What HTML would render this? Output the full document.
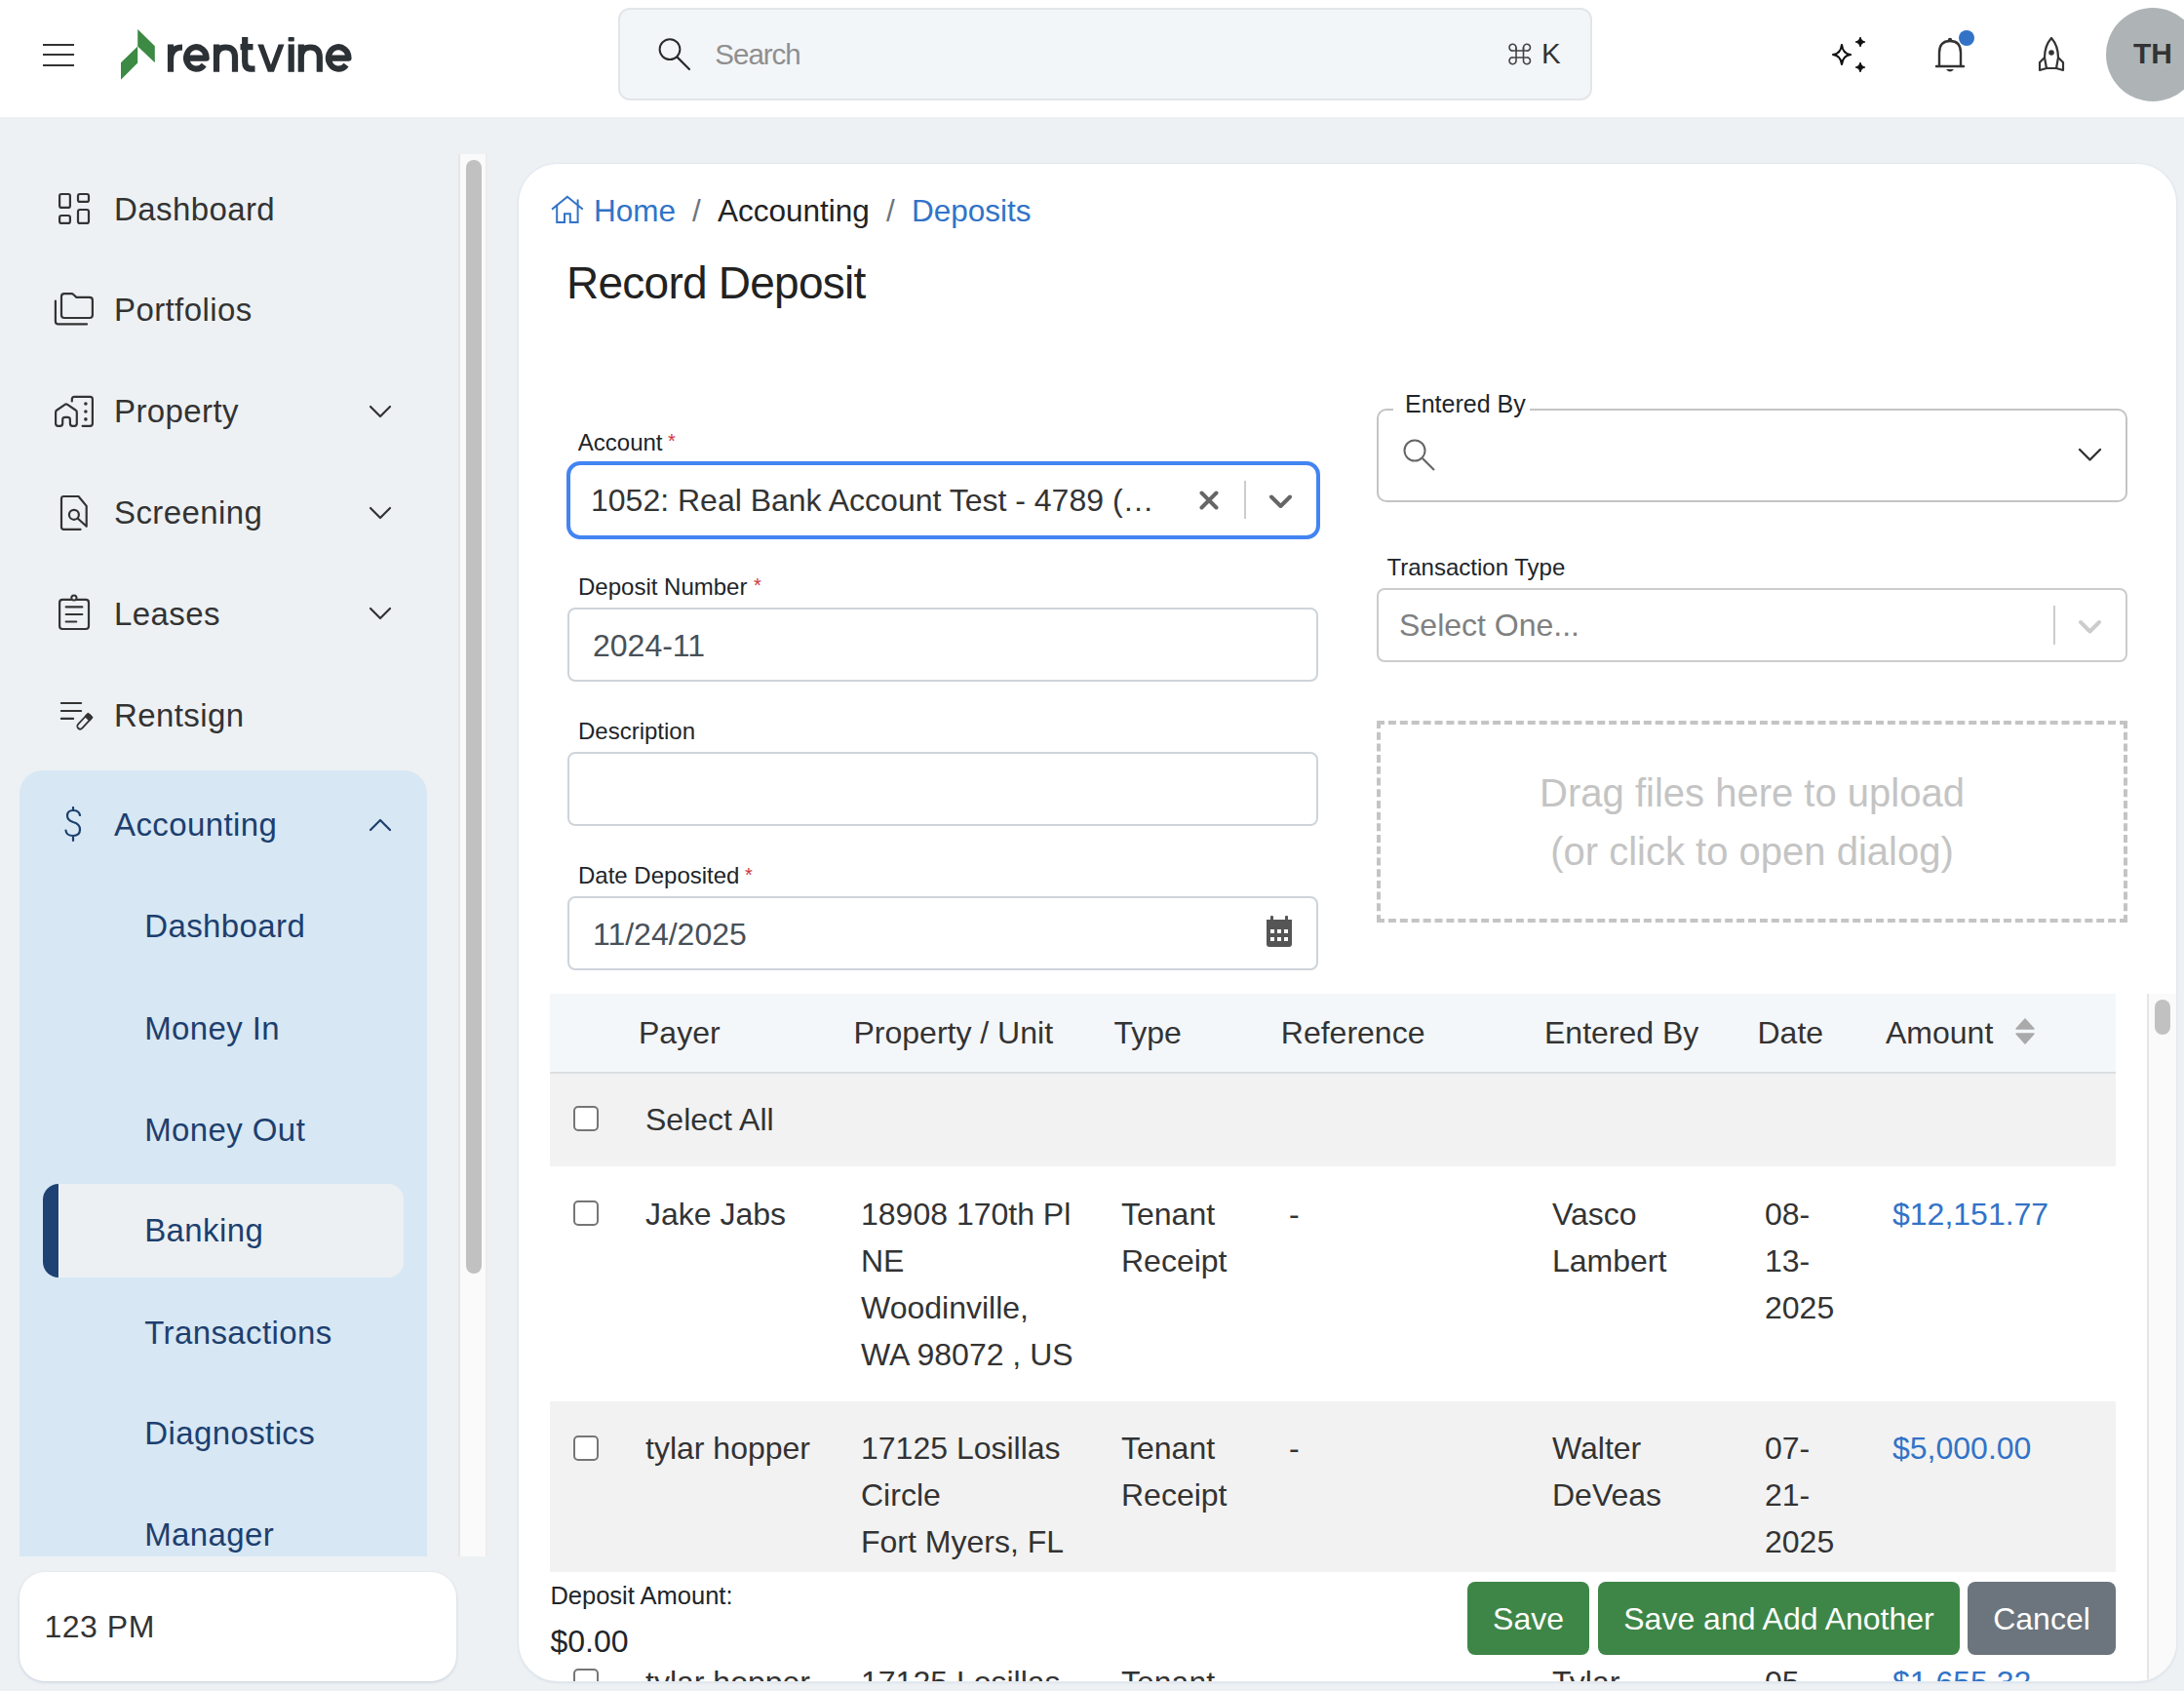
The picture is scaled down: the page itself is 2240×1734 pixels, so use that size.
<!DOCTYPE html>
<html><head><meta charset="utf-8">
<style>
html,body{margin:0;padding:0;}
body{width:2240px;height:1734px;overflow:hidden;position:relative;background:#edf1f4;font-family:"Liberation Sans",sans-serif;}
.a{position:absolute;}
.t{position:absolute;white-space:nowrap;}
#card{position:absolute;left:532px;top:168px;width:1700px;height:1556px;background:#fff;border-radius:40px;box-shadow:0 0 0 1px #e3e9f0, 0 1px 3px rgba(70,100,140,0.22);overflow:hidden;}
#cardin{position:absolute;left:-532px;top:-168px;width:2240px;height:1734px;}
</style></head><body>
<div class="a" style="left:0px;top:0px;width:2240px;height:120px;background:#fff;"></div>
<div class="a" style="left:44px;top:44.5px;width:32px;height:2px;background:#333333;"></div>
<div class="a" style="left:44px;top:55px;width:32px;height:2px;background:#333333;"></div>
<div class="a" style="left:44px;top:65.5px;width:32px;height:2px;background:#333333;"></div>
<svg class="a" style="left:0px;top:0px;" width="380" height="100" viewBox="0 0 380 100"><path d="M141.2 30.1 L158.8 47.2 L158.8 64.3 L141.2 47.6 Z M124 64.3 L141.2 47.6 L141.2 64.6 L124 81.7 Z" fill="#3c8a43"/><g fill="none" stroke="#2c3136" stroke-width="6.2" stroke-linecap="butt" stroke-linejoin="round"><path d="M175 73.8 V45.4 M175 61 Q175 48.5 187 48.5"/><path d="M191.1 59.6 H211.7 A10.3 11.2 0 1 0 209.3 66.6"/><path d="M222 73.8 V45.4 M222 59 Q222 48.5 231.5 48.5 Q241 48.5 241 59 V73.8"/><path d="M251.2 37.9 V63.5 Q251.2 70.7 258 70.7 H261.5 M246.5 48.2 H259.5"/><path d="M298.7 73.8 V45.4"/><path d="M308.8 73.8 V45.4 M308.8 59 Q308.8 48.5 318.3 48.5 Q327.8 48.5 327.8 59 V73.8"/><path d="M336.9 59.6 H357.5 A10.3 11.2 0 1 0 355.1 66.6"/></g><path d="M264.2 45.4 L270.2 45.4 L277.9 66.5 L285.6 45.4 L291.5 45.4 L280.9 73.8 L274.8 73.8 Z" fill="#2c3136"/><rect x="295.6" y="37.9" width="6.2" height="4.6" rx="1.2" fill="#2c3136"/></svg>
<div class="a" style="left:634px;top:8px;width:999px;height:95px;background:#f3f6f9;border:2px solid #e3e6e9;border-radius:12px;box-sizing:border-box;"></div>
<svg class="a" style="left:660px;top:30px;" width="60" height="50" viewBox="0 0 60 50"><circle cx="27" cy="20.6" r="10.4" fill="none" stroke="#2a2a2a" stroke-width="2"/><path d="M34.6 28.6 L47 41" stroke="#2a2a2a" stroke-width="2.2" stroke-linecap="round"/></svg>
<div class="t " style="left:733.3px;top:41.23px;font-size:29.5px;line-height:29.5px;color:#8f8f8f;letter-spacing:-1px;">Search</div>
<svg class="a" style="left:1540px;top:40px;" width="35" height="30" viewBox="0 0 35 30"><g fill="none" stroke="#444" stroke-width="1.6"><path d="M15 8.5 V19.5 M22.5 8.5 V19.5 M11 12 H26.5 M11 19 H26.5"/><path d="M15 12 V9 A3.5 3.5 0 1 0 11.5 12.2 M22.5 12 V9 A3.5 3.5 0 1 1 26 12.2 M15 19 V22 A3.5 3.5 0 1 1 11.5 18.8 M22.5 19 V22 A3.5 3.5 0 1 0 26 18.8"/></g></svg>
<div class="t " style="left:1581px;top:40.03px;font-size:29.5px;line-height:29.5px;color:#333;">K</div>
<svg class="a" style="left:1876px;top:36px;" width="40" height="40" viewBox="0 0 40 40"><path d="M13 10 Q14 19 22 20 Q14 21 13 30 Q12 21 4 20 Q12 19 13 10 Z" fill="none" stroke="#111" stroke-width="2.2" stroke-linejoin="round"/><path d="M32 2 Q32.6 6.4 37 7 Q32.6 7.6 32 12 Q31.4 7.6 27 7 Q31.4 6.4 32 2Z" fill="#111" stroke="#111" stroke-width="1.2"/><path d="M32 28 Q32.6 32.4 37 33 Q32.6 33.6 32 38 Q31.4 33.6 27 33 Q31.4 32.4 32 28Z" fill="#111" stroke="#111" stroke-width="1.2"/></svg>
<svg class="a" style="left:1984px;top:36px;" width="32" height="42" viewBox="0 0 32 42"><path d="M5 31 L5 18 Q5 6 16 6 Q27 6 27 18 L27 31" fill="none" stroke="#333" stroke-width="2.4"/><path d="M2 32 L30 32" stroke="#333" stroke-width="2.4" stroke-linecap="round"/><circle cx="16" cy="5" r="2.2" fill="#333"/><path d="M12 35 Q16 40 20 35 Z" fill="#333"/></svg>
<div class="a" style="left:2009px;top:31px;width:16px;height:16px;background:#3273c7;border-radius:50%;"></div>
<svg class="a" style="left:2089px;top:37px;" width="30" height="38" viewBox="0 0 30 38"><path d="M15 2 Q8 10 8 22 L10 33 L20 33 L22 22 Q22 10 15 2 Z" fill="none" stroke="#333" stroke-width="2.2" stroke-linejoin="round"/><path d="M8 22 L3 27 L3 35 L10 33" fill="none" stroke="#333" stroke-width="2.2" stroke-linejoin="round"/><path d="M22 22 L27 27 L27 35 L20 33" fill="none" stroke="#333" stroke-width="2.2" stroke-linejoin="round"/><circle cx="15" cy="17" r="2.8" fill="#333"/></svg>
<div class="a" style="left:2160px;top:8px;width:96px;height:96px;background:#aeb4b6;border-radius:50%;"></div>
<div class="t " style="left:2188px;top:40.11px;font-size:30px;line-height:30px;color:#333333;font-weight:bold;">TH</div>
<div class="a" style="left:470px;top:158px;width:30px;height:1438px;background:#fafafa;border-left:2px solid #e6e6e6;border-right:2px solid #ececec;box-sizing:border-box;"></div>
<div class="a" style="left:478px;top:164px;width:16px;height:1142px;background:#c1c1c1;border-radius:8px;"></div>
<svg class="a" style="left:58px;top:196px;" width="36" height="36" viewBox="0 0 36 36"><rect x="3.1" y="3" width="10.8" height="13.9" rx="2" fill="none" stroke="#333" stroke-width="2.2" stroke-linecap="round" stroke-linejoin="round"/><rect x="22" y="3" width="11" height="7.9" rx="2" fill="none" stroke="#333" stroke-width="2.2" stroke-linecap="round" stroke-linejoin="round"/><rect x="3.1" y="25" width="10.8" height="7.9" rx="2" fill="none" stroke="#333" stroke-width="2.2" stroke-linecap="round" stroke-linejoin="round"/><rect x="22" y="19" width="11" height="13.9" rx="2" fill="none" stroke="#333" stroke-width="2.2" stroke-linecap="round" stroke-linejoin="round"/></svg>
<div class="t " style="left:117px;top:197.67px;font-size:33px;line-height:33px;color:#333333;letter-spacing:0.4px;">Dashboard</div>
<svg class="a" style="left:54px;top:298px;" width="44" height="38" viewBox="0 0 44 38"><path d="M9 6.1 Q9 3.1 12 3.1 L19.5 3.1 Q20.4 3.1 21 3.8 L24.4 6.9 L37.9 6.9 Q40.9 6.9 40.9 9.9 L40.9 25 Q40.9 28 37.9 28 L12 28 Q9 28 9 25 Z" fill="none" stroke="#333" stroke-width="2.2" stroke-linecap="round" stroke-linejoin="round"/><path d="M2.9 10.7 L2.9 31.4 Q2.9 34.4 5.9 34.4 L35 34.4" fill="none" stroke="#333" stroke-width="2.2" stroke-linecap="round" stroke-linejoin="round"/></svg>
<div class="t " style="left:117px;top:300.87px;font-size:33px;line-height:33px;color:#333333;letter-spacing:0.4px;">Portfolios</div>
<svg class="a" style="left:54px;top:404px;" width="44" height="38" viewBox="0 0 44 38"><path d="M10.2 30.3 Q10.2 32.8 7.7 32.8 H5.6 Q3.1 32.8 3.1 30.3 V18.8 Q3.1 17.3 4.4 16.5 L12.6 10.9 Q13.9 10 15.2 10.9 L23.5 16.5 Q24.8 17.3 24.8 18.8 V30.3 Q24.8 32.8 22.3 32.8 H20.4 Q17.9 32.8 17.9 30.3 V26.4 Q17.9 23.9 15.4 23.9 H12.7 Q10.2 23.9 10.2 26.4 Z" fill="none" stroke="#333" stroke-width="2.2" stroke-linecap="round" stroke-linejoin="round"/><path d="M19.8 7.5 V5.4 Q19.8 2.9 22.3 2.9 H38.4 Q40.9 2.9 40.9 5.4 V30.3 Q40.9 32.8 38.4 32.8 H30.6" fill="none" stroke="#333" stroke-width="2.2" stroke-linecap="round" stroke-linejoin="round"/><circle cx="33.9" cy="10" r="1.8" fill="#333"/><circle cx="33.9" cy="18" r="1.8" fill="#333"/><circle cx="33.9" cy="25.9" r="1.8" fill="#333"/></svg>
<div class="t " style="left:117px;top:405.07px;font-size:33px;line-height:33px;color:#333333;letter-spacing:0.4px;">Property</div>
<svg class="a" style="left:60px;top:506px;" width="34" height="40" viewBox="0 0 34 40"><path d="M22.5 36.9 H5.5 Q3 36.9 3 34.4 V5.5 Q3 3 5.5 3 H20.5 L28.7 12.9 V33.8 L19.9 25.8" fill="none" stroke="#333" stroke-width="2.2" stroke-linecap="round" stroke-linejoin="round"/><circle cx="15.9" cy="21.8" r="5" fill="none" stroke="#333" stroke-width="2.2" stroke-linecap="round" stroke-linejoin="round"/></svg>
<div class="t " style="left:117px;top:509.07px;font-size:33px;line-height:33px;color:#333333;letter-spacing:0.4px;">Screening</div>
<svg class="a" style="left:58px;top:608px;" width="36" height="40" viewBox="0 0 36 40"><rect x="3.1" y="6.9" width="29.9" height="30.1" rx="3" fill="none" stroke="#333" stroke-width="2.2" stroke-linecap="round" stroke-linejoin="round"/><circle cx="17.9" cy="5" r="2.6" fill="#edf1f4" stroke="#333" stroke-width="2"/><path d="M9.7 14.4 L26.3 14.4 M9.7 22 L26.3 22 M9.7 29.5 L20.2 29.5" fill="none" stroke="#333" stroke-width="2.2" stroke-linecap="round" stroke-linejoin="round"/></svg>
<div class="t " style="left:117px;top:613.47px;font-size:33px;line-height:33px;color:#333333;letter-spacing:0.4px;">Leases</div>
<svg class="a" style="left:60px;top:718px;" width="38" height="32" viewBox="0 0 38 32"><path d="M2.9 3 L23.1 3 M2.9 11 L23.1 11 M2.9 18.9 L15.1 18.9" fill="none" stroke="#333" stroke-width="2.2" stroke-linecap="round" stroke-linejoin="round"/><g transform="translate(26.4 22.2) rotate(-47)"><rect x="-9" y="-2.9" width="18" height="5.8" rx="2.9" fill="none" stroke="#333" stroke-width="1.8"/><rect x="4" y="-3.8" width="5.8" height="7.6" rx="1.2" fill="#333"/></g></svg>
<div class="t " style="left:117px;top:717.37px;font-size:33px;line-height:33px;color:#333333;letter-spacing:0.4px;">Rentsign</div>
<div class="a" style="left:20px;top:790px;width:418px;height:806px;background:#d7e7f4;border-radius:24px 24px 0 0;"></div>
<svg class="a" style="left:64px;top:827px;" width="24" height="38" viewBox="0 0 24 38"><path d="M18 9 Q17 4 11 4 Q5 4 5 9.5 Q5 14 11 16 Q18 18 18 23.5 Q18 30 11 30 Q4 30 3.5 24.5 M11 1 L11 4 M11 30 L11 35" fill="none" stroke="#1d3f6e" stroke-width="2.2" stroke-linecap="round"/></svg>
<div class="t " style="left:117px;top:828.77px;font-size:33px;line-height:33px;color:#1d3f6e;letter-spacing:0.4px;">Accounting</div>
<svg class="a" style="left:378px;top:414.5px;" width="24" height="14" viewBox="0 0 24 14"><path d="M2 2 L12 12 L22 2" fill="none" stroke="#333333" stroke-width="2.2" stroke-linecap="round" stroke-linejoin="round"/></svg>
<svg class="a" style="left:378px;top:518.5px;" width="24" height="14" viewBox="0 0 24 14"><path d="M2 2 L12 12 L22 2" fill="none" stroke="#333333" stroke-width="2.2" stroke-linecap="round" stroke-linejoin="round"/></svg>
<svg class="a" style="left:378px;top:622px;" width="24" height="14" viewBox="0 0 24 14"><path d="M2 2 L12 12 L22 2" fill="none" stroke="#333333" stroke-width="2.2" stroke-linecap="round" stroke-linejoin="round"/></svg>
<svg class="a" style="left:378px;top:838.5px;" width="24" height="14" viewBox="0 0 24 14"><path d="M2 12 L12 2 L22 12" fill="none" stroke="#1d3f6e" stroke-width="2.2" stroke-linecap="round" stroke-linejoin="round"/></svg>
<div class="a" style="left:44px;top:1214px;width:370px;height:96px;background:#ecf0f3;border-radius:16px;overflow:hidden;"><div class="a" style="left:0;top:0;width:16px;height:96px;background:#1f4275;"></div><div class="a" style="left:16px;top:0;width:1px;height:96px;background:#fff;"></div></div>
<div class="t " style="left:148.2px;top:932.67px;font-size:33px;line-height:33px;color:#1d3f6e;letter-spacing:0.4px;">Dashboard</div>
<div class="t " style="left:148.2px;top:1038.07px;font-size:33px;line-height:33px;color:#1d3f6e;letter-spacing:0.4px;">Money In</div>
<div class="t " style="left:148.2px;top:1141.57px;font-size:33px;line-height:33px;color:#1d3f6e;letter-spacing:0.4px;">Money Out</div>
<div class="t " style="left:148.2px;top:1245.47px;font-size:33px;line-height:33px;color:#1d3f6e;letter-spacing:0.4px;">Banking</div>
<div class="t " style="left:148.2px;top:1349.67px;font-size:33px;line-height:33px;color:#1d3f6e;letter-spacing:0.4px;">Transactions</div>
<div class="t " style="left:148.2px;top:1453.07px;font-size:33px;line-height:33px;color:#1d3f6e;letter-spacing:0.4px;">Diagnostics</div>
<div class="t " style="left:148.2px;top:1557.07px;font-size:33px;line-height:33px;color:#1d3f6e;letter-spacing:0.4px;">Manager</div>
<div class="a" style="left:20px;top:1612px;width:448px;height:112px;background:#fff;border-radius:26px;box-shadow:0 1px 3px rgba(70,100,140,0.25);"></div>
<div class="t " style="left:45.5px;top:1651.91px;font-size:32px;line-height:32px;color:#333333;letter-spacing:0.5px;">123 PM</div>

<div id="card"><div id="cardin">
<svg class="a" style="left:564px;top:199px;" width="36" height="32" viewBox="0 0 36 32"><path d="M2.8 15 L17.9 2.8 L33 15 M7.2 11.6 L7.2 29.1 L15 29.1 L15 20.2 L20.8 20.2 L20.8 29.1 L28.6 29.1 L28.6 6.6" fill="none" stroke="#3273c7" stroke-width="2" stroke-linecap="square" stroke-linejoin="miter"/></svg>
<div class="t " style="left:609px;top:200.94px;font-size:31.5px;line-height:31.5px;color:#3273c7;">Home</div>
<div class="t " style="left:710px;top:200.94px;font-size:31.5px;line-height:31.5px;color:#6c757d;">/</div>
<div class="t " style="left:736px;top:200.94px;font-size:31.5px;line-height:31.5px;color:#222;">Accounting</div>
<div class="t " style="left:909px;top:200.94px;font-size:31.5px;line-height:31.5px;color:#6c757d;">/</div>
<div class="t " style="left:935px;top:200.94px;font-size:31.5px;line-height:31.5px;color:#3273c7;">Deposits</div>
<div class="t " style="left:581px;top:267.36px;font-size:46px;line-height:46px;color:#222;letter-spacing:-0.75px;">Record Deposit</div>
<div class="t " style="left:592.8px;top:441.68px;font-size:24px;line-height:24px;color:#212529;">Account</div>
<div class="t " style="left:685px;top:442.07px;font-size:20px;line-height:20px;color:#d0353f;">*</div>
<div class="a" style="left:581px;top:473px;width:773px;height:80px;border:4px solid #4384f3;border-radius:14px;box-sizing:border-box;background:#fff;"></div>
<div class="t " style="left:606px;top:496.91px;font-size:32px;line-height:32px;color:#333333;">1052: Real Bank Account Test - 4789 (…</div>
<svg class="a" style="left:1228px;top:501px;" width="24" height="24" viewBox="0 0 24 24"><path d="M4.5 4.5 L19.5 19.5 M19.5 4.5 L4.5 19.5" stroke="#666" stroke-width="4" stroke-linecap="round"/></svg>
<div class="a" style="left:1276px;top:493px;width:2px;height:39px;background:#cccccc;"></div>
<svg class="a" style="left:1300px;top:503px;" width="28" height="22" viewBox="0 0 28 22"><path d="M4 6.5 L13.5 16 L23 6.5" fill="none" stroke="#666" stroke-width="4" stroke-linecap="round" stroke-linejoin="round"/></svg>
<div class="t " style="left:593px;top:589.68px;font-size:24px;line-height:24px;color:#212529;">Deposit Number</div>
<div class="t " style="left:773px;top:590.07px;font-size:20px;line-height:20px;color:#d0353f;">*</div>
<div class="a" style="left:582px;top:623px;width:770px;height:76px;border:2px solid #ced4da;border-radius:8px;box-sizing:border-box;background:#fff;"></div>
<div class="t " style="left:608px;top:645.61px;font-size:32px;line-height:32px;color:#495057;">2024-11</div>
<div class="t " style="left:593px;top:738.08px;font-size:24px;line-height:24px;color:#212529;">Description</div>
<div class="a" style="left:582px;top:771px;width:770px;height:76px;border:2px solid #ced4da;border-radius:8px;box-sizing:border-box;background:#fff;"></div>
<div class="t " style="left:593px;top:886.38px;font-size:24px;line-height:24px;color:#212529;">Date Deposited</div>
<div class="t " style="left:764px;top:886.77px;font-size:20px;line-height:20px;color:#d0353f;">*</div>
<div class="a" style="left:582px;top:919px;width:770px;height:76px;border:2px solid #ced4da;border-radius:8px;box-sizing:border-box;background:#fff;"></div>
<div class="t " style="left:608px;top:941.51px;font-size:32px;line-height:32px;color:#495057;">11/24/2025</div>
<svg class="a" style="left:1297px;top:938px;" width="30" height="35" viewBox="0 0 30 35"><rect x="2" y="5" width="26" height="28" rx="3" fill="#555"/><rect x="6" y="1" width="3" height="6" rx="1" fill="#555"/><rect x="21" y="1" width="3" height="6" rx="1" fill="#555"/><rect x="2" y="5" width="26" height="7" fill="#555"/><g fill="#fff"><rect x="6" y="15" width="4" height="4"/><rect x="13" y="15" width="4" height="4"/><rect x="20" y="15" width="4" height="4"/><rect x="6" y="23" width="4" height="4"/><rect x="13" y="23" width="4" height="4"/><rect x="20" y="23" width="4" height="4"/></g></svg>
<div class="a" style="left:1412px;top:419px;width:770px;height:96px;border:2px solid #c4c4c4;border-radius:10px;box-sizing:border-box;"></div>
<div class="a" style="left:1429px;top:415px;width:140px;height:8px;background:#fff;"></div>
<div class="t " style="left:1441px;top:402.14px;font-size:25px;line-height:25px;color:#212529;letter-spacing:0px;">Entered By</div>
<svg class="a" style="left:1438px;top:449px;" width="36" height="36" viewBox="0 0 36 36"><circle cx="13" cy="13" r="10.5" fill="none" stroke="#666" stroke-width="2"/><path d="M21 21 L33 33" stroke="#666" stroke-width="2.2"/></svg>
<svg class="a" style="left:2130px;top:458px;" width="28" height="18" viewBox="0 0 28 18"><path d="M3 3 L13.5 13.5 L24 3" fill="none" stroke="#333" stroke-width="2.4" stroke-linecap="round" stroke-linejoin="round"/></svg>
<div class="t " style="left:1422.5px;top:570.38px;font-size:24px;line-height:24px;color:#212529;">Transaction Type</div>
<div class="a" style="left:1412px;top:603px;width:770px;height:76px;border:2px solid #cccccc;border-radius:8px;box-sizing:border-box;"></div>
<div class="t " style="left:1435px;top:624.61px;font-size:32px;line-height:32px;color:#808080;">Select One...</div>
<div class="a" style="left:2106px;top:621px;width:2px;height:40px;background:#cccccc;"></div>
<svg class="a" style="left:2130px;top:632.5px;" width="28" height="22" viewBox="0 0 28 22"><path d="M4 5 L13.5 14.5 L23 5" fill="none" stroke="#cccccc" stroke-width="4" stroke-linecap="round" stroke-linejoin="round"/></svg>
<div class="a" style="left:1412px;top:739px;width:770px;height:207px;border:4px dashed #c4c4c4;box-sizing:border-box;"></div>
<div class="t" style="left:1413px;top:793.14px;width:768px;text-align:center;font-size:40px;line-height:40px;color:#c4c4c4;">Drag files here to upload</div>
<div class="t" style="left:1413px;top:852.94px;width:768px;text-align:center;font-size:40px;line-height:40px;color:#c4c4c4;">(or click to open dialog)</div>
<div class="a" style="left:564px;top:1019px;width:1606px;height:82px;background:#f4f7fa;border-bottom:2px solid #dcdfe2;box-sizing:border-box;"></div>
<div class="t " style="left:655px;top:1042.91px;font-size:32px;line-height:32px;color:#333333;">Payer</div>
<div class="t " style="left:875.5px;top:1042.91px;font-size:32px;line-height:32px;color:#333333;">Property / Unit</div>
<div class="t " style="left:1142.5px;top:1042.91px;font-size:32px;line-height:32px;color:#333333;">Type</div>
<div class="t " style="left:1313.8px;top:1042.91px;font-size:32px;line-height:32px;color:#333333;">Reference</div>
<div class="t " style="left:1584px;top:1042.91px;font-size:32px;line-height:32px;color:#333333;">Entered By</div>
<div class="t " style="left:1802.5px;top:1042.91px;font-size:32px;line-height:32px;color:#333333;">Date</div>
<div class="t " style="left:1934px;top:1042.91px;font-size:32px;line-height:32px;color:#333333;">Amount</div>
<svg class="a" style="left:2066px;top:1043px;" width="22" height="30" viewBox="0 0 22 30"><path d="M2 12 L11 2 L20 12 Z M2 17 L11 27 L20 17 Z" fill="#aaaaaa" stroke="#aaaaaa" stroke-width="1.5" stroke-linejoin="round"/></svg>
<div class="a" style="left:564px;top:1101px;width:1606px;height:96px;background:#f2f2f2;"></div>
<div class="a" style="left:588px;top:1134px;width:26px;height:26px;border:2px solid #767676;border-radius:5px;box-sizing:border-box;background:#fff;"></div>
<div class="t " style="left:662px;top:1132.41px;font-size:32px;line-height:32px;color:#333333;">Select All</div>
<div class="a" style="left:564px;top:1196px;width:1606px;height:241px;background:#fff;"></div>
<div class="a" style="left:588px;top:1230.5px;width:26px;height:26px;border:2px solid #767676;border-radius:5px;box-sizing:border-box;background:#fff;"></div>
<div class="t " style="left:662px;top:1228.91px;font-size:32px;line-height:32px;color:#333333;">Jake Jabs</div>
<div class="t " style="left:883px;top:1228.91px;font-size:32px;line-height:32px;color:#333333;">18908 170th Pl</div>
<div class="t " style="left:883px;top:1276.91px;font-size:32px;line-height:32px;color:#333333;">NE</div>
<div class="t " style="left:883px;top:1324.91px;font-size:32px;line-height:32px;color:#333333;">Woodinville,</div>
<div class="t " style="left:883px;top:1372.91px;font-size:32px;line-height:32px;color:#333333;">WA 98072 , US</div>
<div class="t " style="left:1150px;top:1228.91px;font-size:32px;line-height:32px;color:#333333;">Tenant</div>
<div class="t " style="left:1150px;top:1276.91px;font-size:32px;line-height:32px;color:#333333;">Receipt</div>
<div class="t " style="left:1322px;top:1228.91px;font-size:32px;line-height:32px;color:#333333;">-</div>
<div class="t " style="left:1592px;top:1228.91px;font-size:32px;line-height:32px;color:#333333;">Vasco</div>
<div class="t " style="left:1592px;top:1276.91px;font-size:32px;line-height:32px;color:#333333;">Lambert</div>
<div class="t " style="left:1810px;top:1228.91px;font-size:32px;line-height:32px;color:#333333;">08-</div>
<div class="t " style="left:1810px;top:1276.91px;font-size:32px;line-height:32px;color:#333333;">13-</div>
<div class="t " style="left:1810px;top:1324.91px;font-size:32px;line-height:32px;color:#333333;">2025</div>
<div class="t " style="left:1941px;top:1228.91px;font-size:32px;line-height:32px;color:#3273c7;">$12,151.77</div>
<div class="a" style="left:564px;top:1437px;width:1606px;height:175px;background:#f2f2f2;"></div>
<div class="a" style="left:588px;top:1471.5px;width:26px;height:26px;border:2px solid #767676;border-radius:5px;box-sizing:border-box;background:#fff;"></div>
<div class="t " style="left:662px;top:1468.61px;font-size:32px;line-height:32px;color:#333333;">tylar hopper</div>
<div class="t " style="left:883px;top:1468.61px;font-size:32px;line-height:32px;color:#333333;">17125 Losillas</div>
<div class="t " style="left:883px;top:1516.61px;font-size:32px;line-height:32px;color:#333333;">Circle</div>
<div class="t " style="left:883px;top:1564.61px;font-size:32px;line-height:32px;color:#333333;">Fort Myers, FL</div>
<div class="t " style="left:1150px;top:1468.61px;font-size:32px;line-height:32px;color:#333333;">Tenant</div>
<div class="t " style="left:1150px;top:1516.61px;font-size:32px;line-height:32px;color:#333333;">Receipt</div>
<div class="t " style="left:1322px;top:1468.61px;font-size:32px;line-height:32px;color:#333333;">-</div>
<div class="t " style="left:1592px;top:1468.61px;font-size:32px;line-height:32px;color:#333333;">Walter</div>
<div class="t " style="left:1592px;top:1516.61px;font-size:32px;line-height:32px;color:#333333;">DeVeas</div>
<div class="t " style="left:1810px;top:1468.61px;font-size:32px;line-height:32px;color:#333333;">07-</div>
<div class="t " style="left:1810px;top:1516.61px;font-size:32px;line-height:32px;color:#333333;">21-</div>
<div class="t " style="left:1810px;top:1564.61px;font-size:32px;line-height:32px;color:#333333;">2025</div>
<div class="t " style="left:1941px;top:1468.61px;font-size:32px;line-height:32px;color:#3273c7;">$5,000.00</div>
<div class="a" style="left:588px;top:1710.5px;width:26px;height:26px;border:2px solid #767676;border-radius:5px;box-sizing:border-box;background:#fff;"></div>
<div class="t " style="left:662px;top:1709.41px;font-size:32px;line-height:32px;color:#333333;">tylar hopper</div>
<div class="t " style="left:883px;top:1709.41px;font-size:32px;line-height:32px;color:#333333;">17125 Losillas</div>
<div class="t " style="left:1150px;top:1709.41px;font-size:32px;line-height:32px;color:#333333;">Tenant</div>
<div class="t " style="left:1592px;top:1709.41px;font-size:32px;line-height:32px;color:#333333;">Tylar</div>
<div class="t " style="left:1810px;top:1709.41px;font-size:32px;line-height:32px;color:#333333;">05-</div>
<div class="t " style="left:1941px;top:1709.41px;font-size:32px;line-height:32px;color:#3273c7;">$1,655.32</div>
<div class="t " style="left:564.4px;top:1624.41px;font-size:25.5px;line-height:25.5px;color:#212529;">Deposit Amount:</div>
<div class="t " style="left:564.4px;top:1667.41px;font-size:32px;line-height:32px;color:#212529;">$0.00</div>
<div class="a" style="left:1505px;top:1622px;width:125px;height:75px;background:#3e8647;border-radius:8px;"></div>
<div class="a" style="left:1639px;top:1622px;width:371px;height:75px;background:#3e8647;border-radius:8px;"></div>
<div class="a" style="left:2018px;top:1622px;width:152px;height:75px;background:#6c757d;border-radius:8px;"></div>
<div class="t" style="left:1505px;top:1643.61px;width:125px;text-align:center;font-size:32px;line-height:32px;color:#fff;">Save</div>
<div class="t" style="left:1639px;top:1643.61px;width:371px;text-align:center;font-size:32px;line-height:32px;color:#fff;">Save and Add Another</div>
<div class="t" style="left:2018px;top:1643.61px;width:152px;text-align:center;font-size:32px;line-height:32px;color:#fff;">Cancel</div>
<div class="a" style="left:2202px;top:1019px;width:30px;height:705px;background:#fafafa;border-left:2px solid #e6e6e6;box-sizing:border-box;"></div>
<div class="a" style="left:2210px;top:1025px;width:16px;height:36px;background:#c1c1c1;border-radius:8px;"></div>

</div></div>
</body></html>
